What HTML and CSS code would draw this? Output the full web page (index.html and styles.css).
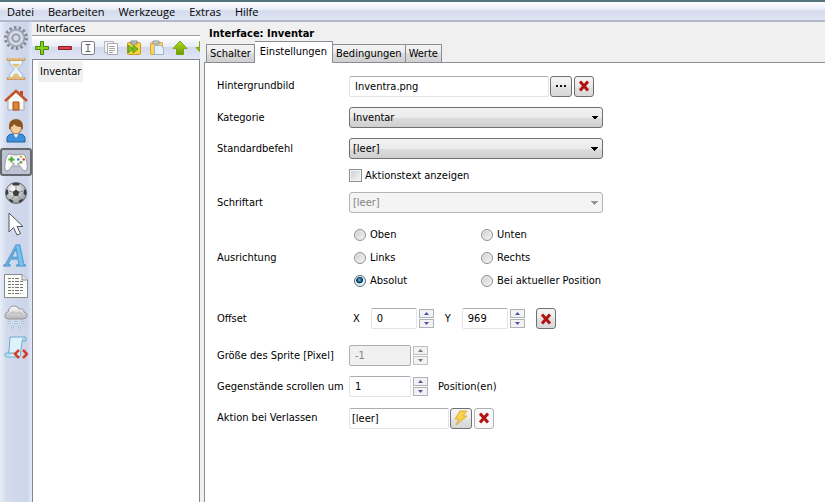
FILE: index.html
```html
<!DOCTYPE html>
<html lang="de">
<head>
    <meta charset="UTF-8">
    <meta name="viewport" content="width=device-width, initial-scale=1.0">
    <title>Interfaces</title>
    <link rel="stylesheet" href="styles.css">
</head>
<body>
    <!-- shared gradients and symbols -->
    <svg class="defs" width="0" height="0" aria-hidden="true">
        <defs>
            <linearGradient id="gBlue" x1="0" y1="0" x2="1" y2="1"><stop offset="0" stop-color="#c5ebfc"/><stop offset="1" stop-color="#3f9bdc"/></linearGradient>
            <linearGradient id="gGrey" x1="0" y1="0" x2="0" y2="1"><stop offset="0" stop-color="#fcfcfc"/><stop offset="1" stop-color="#b5b5b8"/></linearGradient>
            <linearGradient id="gGreen" x1="0" y1="0" x2="0" y2="1"><stop offset="0" stop-color="#b5dc1c"/><stop offset="1" stop-color="#659c06"/></linearGradient>
            <radialGradient id="gBall" cx="40%" cy="30%" r="70%"><stop offset="0" stop-color="#ffffff"/><stop offset="1" stop-color="#95999d"/></radialGradient>
            <symbol id="delete" viewBox="0 0 12 12"><path d="M2 1.500L10 10.500M10 1.500L2 10.500" stroke="#b31212" stroke-width="3" fill="none"/></symbol>
            <symbol id="up" viewBox="0 0 5 3"><path d="M0 3L2.500 0L5 3z" fill="currentColor"/></symbol>
            <symbol id="down" viewBox="0 0 5 3"><path d="M0 0L2.500 3L5 0z" fill="currentColor"/></symbol>
        </defs>
    </svg>

    <nav class="menubar">
        <a href="#">Datei</a>
        <a href="#">Bearbeiten</a>
        <a href="#">Werkzeuge</a>
        <a href="#">Extras</a>
        <a href="#">Hilfe</a>
    </nav>

    <div class="workspace">
        <div class="rail">
            <button type="button" aria-label="Spiel">
                <svg viewBox="0 0 24 24"><circle cx="12" cy="12" r="10.500" fill="none" stroke="#858a98" stroke-width="3" stroke-dasharray="2.500 2.210"/><circle cx="12" cy="12" r="8.500" fill="#bcc0cc" stroke="#8b90a0"/><circle cx="12" cy="12" r="6" fill="none" stroke="#dfe2ea" stroke-width="1.500"/><circle cx="12" cy="12" r="3.500" fill="#d3daeb" stroke="#7d8292"/></svg>
            </button>
            <button type="button" aria-label="Zeit">
                <svg viewBox="0 0 24 24"><path d="M5 3C5 9 10 10 10 12S5 15 5 21H19C19 15 14 14 14 12S19 9 19 3z" fill="#e8f5fc" stroke="#8db5cc"/><path d="M8 7H16Q15 9 12 11Q9 9 8 7zM8 20Q9 17 12 16Q15 17 16 20z" fill="#e6c07c"/><path d="M4 2.500H20M4 21.500H20" stroke="#cf9c5c" stroke-width="3" stroke-linecap="round"/><path d="M4 2H20M4 21H20" stroke="#f4d9ac"/></svg>
            </button>
            <button type="button" aria-label="Räume">
                <svg viewBox="0 0 24 24"><path d="M16 3H19V9H16z" fill="#c84a28"/><path d="M4 11L12 4L20 11V22H4z" fill="#fafafa" stroke="#a5a5a5"/><path d="M1 13L12 3L23 13" fill="none" stroke="#c65526" stroke-width="2.500"/><path d="M9 14H15V22H9z" fill="#df8432" stroke="#a65317"/></svg>
            </button>
            <button type="button" aria-label="Personen">
                <svg viewBox="0 0 24 24"><path d="M3 23Q2 15 8 15H16Q22 15 21 23z" fill="#3f8fd8" stroke="#2165a8"/><path d="M9 14L12 19L15 14z" fill="#ffffff"/><ellipse cx="12" cy="8.500" rx="5.500" ry="6.500" fill="#f5cc9d" stroke="#a46b36"/><path d="M5 11Q4 0 12 0T19 11L17 8Q12 8 10 5Q9 8 7 8z" fill="#8a5420"/></svg>
            </button>
            <button type="button" class="active" aria-label="Interfaces">
                <svg viewBox="0 0 24 24"><path d="M5 4Q12 6 19 4Q22 5 23 13Q24 21 21 21Q19 21 16 16H8Q5 21 3 21Q0 21 1 13Q2 5 5 4z" fill="#fafafa" stroke="#9a9a9c"/><path d="M4.500 9.500H10.500M7.500 6.500V12.500" stroke="#4da83a" stroke-width="2"/><circle cx="17" cy="6.800" r="1.300" fill="#e3ae25"/><circle cx="14.300" cy="9.500" r="1.300" fill="#3a7bd0"/><circle cx="19.700" cy="9.500" r="1.300" fill="#d43b2c"/><circle cx="17" cy="12.200" r="1.300" fill="#46a53b"/><circle cx="9.500" cy="14" r="1.500" fill="#b5b5b8"/><circle cx="14.500" cy="14" r="1.500" fill="#b5b5b8"/></svg>
            </button>
            <button type="button" aria-label="Objekte">
                <svg viewBox="0 0 24 24"><circle cx="12" cy="12" r="10.500" fill="url(#gBall)" stroke="#6a6c6f"/><path d="M12 8.500L15.500 11L14 15H10L8.500 11zM8 2.500Q12 1 16 2.500L15 4.500H9zM2 9L4 8.500L4.500 13L2 14.500Q1.500 11 2 9zM22 9L20 8.500L19.500 13L22 14.500Q22.500 11 22 9zM6 18L9 19.500L9 22Q6 21 4.500 18.500zM18 18L15 19.500L15 22Q18 21 19.500 18.500z" fill="#3d3f42"/><path d="M12 8.500V5M8.500 11L5 10M15.500 11L19 10M10 15L8 18M14 15L16 18" stroke="#8a8a8a"/></svg>
            </button>
            <button type="button" aria-label="Cursor">
                <svg viewBox="0 0 24 24"><path d="M5 1V20L9.500 15.500L13 23L16.500 21.500L13 14.500H19z" fill="#ffffff" stroke="#55575c"/></svg>
            </button>
            <button type="button" aria-label="Schriftarten">
                <span class="font-glyph">A</span>
            </button>
            <button type="button" aria-label="Texte">
                <svg viewBox="0 0 24 24"><path d="M.5.500H18L23.500 6V23.500H.5z" fill="#fbfbf8" stroke="#8a8a8a"/><path d="M18 .5V6H23.500" fill="#e4e4e4" stroke="#8a8a8a"/><path d="M4 4.500H16M4 7.500H20M4 10.500H20M4 13.500H20M4 16.500H20M4 19.500H17" stroke="#777777" stroke-dasharray="3 1 2 1 4 1"/></svg>
            </button>
            <button type="button" aria-label="Partikel">
                <svg viewBox="0 0 24 24"><path d="M4 14Q0 13 1 10Q2 7 4 7Q5 1 10 1Q14 1 15 4Q20 3 20 7Q24 8 23 11Q22 14 19 14z" fill="url(#gGrey)" stroke="#969696"/><path d="M6 9Q9 5 12 9Q16 5 18 10" fill="none" stroke="#b2b2b2"/><g fill="#ffffff" stroke="#9fb7d1"><circle cx="5" cy="17.500" r="1.200"/><circle cx="12" cy="17.500" r="1.200"/><circle cx="19" cy="17.500" r="1.200"/><circle cx="8.500" cy="22" r="1.200"/><circle cx="15.500" cy="22" r="1.200"/></g></svg>
            </button>
            <button type="button" aria-label="Skripte">
                <svg viewBox="0 0 24 24"><path d="M6 1H21Q18 2 18 6L16 21H2Q5 20 5 15z" fill="#def2fb" stroke="#6eaacb"/><path d="M18 5H22Q23 1 20 1M2 21Q-1 17 3 17H12" fill="#b6def1" stroke="#6eaacb"/><path d="M15 14L11 18L15 22M19 14L23 18L19 22" fill="none" stroke="#d43d2b" stroke-width="2.500"/></svg>
            </button>
        </div>

        <section class="sidebar">
            <h2>Interfaces</h2>
            <div class="toolbar">
                <button type="button" aria-label="Hinzufügen"><svg viewBox="0 0 16 16"><path d="M6.500 1.500H9.500V6.500H14.500V9.500H9.500V14.500H6.500V9.500H1.500V6.500H6.500z" fill="#8ed11e" stroke="#41870b"/></svg></button>
                <button type="button" aria-label="Entfernen"><svg viewBox="0 0 16 16"><path d="M1.500 6.500H14.500V9.500H1.500z" fill="#d84444" stroke="#8f1f26"/></svg></button>
                <button type="button" aria-label="Umbenennen"><svg viewBox="0 0 16 16"><rect x="1.500" y="1.500" width="13" height="13" rx="2" fill="#ffffff" stroke="#77797e"/><path d="M5.500 4.500H10.500M8 4.500V11.500M5.500 11.500H10.500" stroke="#606268" fill="none"/></svg></button>
                <button type="button" aria-label="Kopieren"><svg viewBox="0 0 16 16"><path d="M1.500 1.500H10.500V12.500H1.500z" fill="#f5f5f5" stroke="#b7b7bb"/><path d="M4.500 3.500H14.500V14.500H4.500z" fill="#ffffff" stroke="#a8a8ad"/><path d="M6 6.500H12M6 8.500H12M6 10.500H12M6 12.500H10" stroke="#a5a5aa"/></svg></button>
                <button type="button" aria-label="Einfügen und ersetzen"><svg viewBox="0 0 16 16"><rect x="1.500" y="2.500" width="13" height="12" rx="1" fill="#f9d43d" stroke="#c99a20"/><path d="M5 1H11V4H5z" fill="#bfc2c6" stroke="#85888c"/><path d="M2 5L7 9L2 13zM7 5L12 9L7 13z" fill="#82bb20" stroke="#5d9a1b"/></svg></button>
                <button type="button" aria-label="Einfügen"><svg viewBox="0 0 16 16"><rect x="1.500" y="2.500" width="12" height="12" rx="1" fill="#f8d45b" stroke="#d0a544"/><path d="M4 1H10V4H4z" fill="#c9ccd0" stroke="#94979b"/><path d="M5.500 5.500H12L14.500 8V14.500H5.500z" fill="#e4f1fb" stroke="#9bb8cd"/></svg></button>
                <button type="button" aria-label="Nach oben"><svg viewBox="0 0 16 16"><path d="M8 1L15 8.500H11.500V14.500H4.500V8.500H1z" fill="url(#gGreen)" stroke="#7ea60b"/></svg></button>
                <button type="button" aria-label="Nach unten"><svg viewBox="0 0 16 16"><path d="M8 15L1 7.500H4.500V1.500H11.500V7.500H15z" fill="url(#gGreen)" stroke="#7ea60b"/></svg></button>
            </div>
            <ul class="list">
                <li>Inventar</li>
            </ul>
        </section>

        <main class="editor">
            <h1>Interface: Inventar</h1>
            <div class="tabs" role="tablist">
                <button type="button" role="tab">Schalter</button>
                <button type="button" role="tab" class="selected" aria-selected="true">Einstellungen</button>
                <button type="button" role="tab">Bedingungen</button>
                <button type="button" role="tab">Werte</button>
            </div>
            <form class="panel">
                <label for="background">Hintergrundbild</label>
                <div class="field tall">
                    <input type="text" id="background" class="wide" value="Inventra.png">
                    <button type="button" class="icon-btn" aria-label="Durchsuchen"><svg viewBox="0 0 12 12"><path d="M1 5H3V7H1zM5 5H7V7H5zM9 5H11V7H9z" fill="#111111"/></svg></button>
                    <button type="button" class="icon-btn" aria-label="Bild entfernen"><svg><use href="#delete"/></svg></button>
                </div>

                <label for="category">Kategorie</label>
                <select id="category"><option>Inventar</option></select>

                <label for="command">Standardbefehl</label>
                <select id="command"><option>[leer]</option></select>

                <label class="check"><input type="checkbox">Aktionstext anzeigen</label>

                <label for="font">Schriftart</label>
                <select id="font" disabled><option>[leer]</option></select>

                <span id="align-label">Ausrichtung</span>
                <div class="radios" role="radiogroup" aria-labelledby="align-label">
                    <label><input type="radio" name="align">Oben</label>
                    <label><input type="radio" name="align">Unten</label>
                    <label><input type="radio" name="align">Links</label>
                    <label><input type="radio" name="align">Rechts</label>
                    <label><input type="radio" name="align" checked>Absolut</label>
                    <label><input type="radio" name="align">Bei aktueller Position</label>
                </div>

                <span class="spaced">Offset</span>
                <div class="field spaced offset">
                    <label for="offset-x">X</label>
                    <div class="spinner">
                        <input type="number" id="offset-x" value="0">
                        <div class="steps">
                            <button type="button" aria-label="X erhöhen"><svg><use href="#up"/></svg></button>
                            <button type="button" aria-label="X verringern"><svg><use href="#down"/></svg></button>
                        </div>
                    </div>
                    <label for="offset-y">Y</label>
                    <div class="spinner">
                        <input type="number" id="offset-y" value="969">
                        <div class="steps">
                            <button type="button" aria-label="Y erhöhen"><svg><use href="#up"/></svg></button>
                            <button type="button" aria-label="Y verringern"><svg><use href="#down"/></svg></button>
                        </div>
                    </div>
                    <button type="button" class="icon-btn narrow" aria-label="Offset entfernen"><svg><use href="#delete"/></svg></button>
                </div>

                <label class="spaced" for="size">Größe des Sprite [Pixel]</label>
                <div class="spinner large spaced">
                    <input type="number" id="size" value="-1" disabled>
                    <div class="steps">
                        <button type="button" aria-label="Größe erhöhen" disabled><svg><use href="#up"/></svg></button>
                        <button type="button" aria-label="Größe verringern" disabled><svg><use href="#down"/></svg></button>
                    </div>
                </div>

                <label for="scroll">Gegenstände scrollen um</label>
                <div class="field scroll">
                    <div class="spinner large">
                        <input type="number" id="scroll" value="1">
                        <div class="steps">
                            <button type="button" aria-label="Positionen erhöhen"><svg><use href="#up"/></svg></button>
                            <button type="button" aria-label="Positionen verringern"><svg><use href="#down"/></svg></button>
                        </div>
                    </div>
                    <span>Position(en)</span>
                </div>

                <label for="leave">Aktion bei Verlassen</label>
                <div class="field tall">
                    <input type="text" id="leave" class="action" value="[leer]">
                    <button type="button" class="icon-btn" aria-label="Aktion bearbeiten"><svg class="bolt" viewBox="0 0 16 16"><path d="M7 1L14 1L10 6L14 6L3 15L6 9L2 9z" fill="#fbd34b" stroke="#e0ab3a"/></svg></button>
                    <button type="button" class="icon-btn light" aria-label="Aktion entfernen"><svg><use href="#delete"/></svg></button>
                </div>
            </form>
        </main>
    </div>
</body>
</html>
```

FILE: styles.css
```css
* { box-sizing: border-box; }
body {
    margin: 0;
    min-height: 100vh;
    display: flex;
    flex-direction: column;
    background: #f0f0f0;
    color: #000;
    font: 11px/14px Tahoma, "DejaVu Sans Condensed", "Liberation Sans", sans-serif;
}
button, input, select { font: inherit; color: inherit; margin: 0; }
button { padding: 0; }
h1, h2 { margin: 0; font-size: 11px; }
.defs { position: absolute; }

/* Menu */
.menubar {
    display: flex;
    gap: 14px;
    height: 22px;
    padding: 2px 7px 0;
    border-top: 2px solid #55737d;
    border-bottom: 2px solid #b4b7cb;
    background: linear-gradient(#fff, #e9edf8 40%, #d4dbed 50%, #e1e6f5);
    font-family: "Open Sans", sans-serif;
    line-height: 16px;
}
.menubar a { color: #000; text-decoration: none; }

.workspace { flex: 1; display: flex; }

/* Icon rail */
.rail {
    flex: 0 0 32px;
    display: flex;
    flex-direction: column;
    gap: 3px;
    padding-top: 2px;
    background: linear-gradient(90deg, #e8edf8, #d3dbed 20%, #ccd5ea 85%, #e4e9f5);
}
.rail button {
    height: 28px;
    display: flex;
    align-items: center;
    justify-content: center;
    border: 1px solid transparent;
    border-radius: 3px;
    background: none;
}
.rail svg { width: 24px; height: 24px; }
.rail .active {
    border: 2px solid #66686e;
    background: #bcc3d4;
}
.font-glyph {
    color: #7cc2ec;
    font: italic bold 32px/28px "Liberation Serif", serif;
    -webkit-text-stroke: 1px #4a98d0;
}

/* Interface list */
.sidebar {
    flex: 0 0 168px;
    min-width: 0;
    display: flex;
    flex-direction: column;
}
.sidebar h2 {
    height: 14px;
    padding-left: 4px;
    border-bottom: 1px solid #a0a0a0;
    font-weight: normal;
}
.toolbar {
    display: flex;
    gap: 7px;
    height: 23px;
    padding: 4px 0 0 2px;
    overflow: hidden;
    background: linear-gradient(#fff, #e9edf8 45%, #d3daed 50%, #e1e6f6);
}
.toolbar button { flex: 0 0 16px; height: 16px; border: 0; background: none; }
.toolbar svg { display: block; width: 16px; height: 16px; }
.list {
    flex: 1;
    margin: 0;
    padding: 1px 5px;
    border: 1px solid #828790;
    border-bottom: 0;
    background: #fff;
    list-style: none;
}
.list li {
    width: max-content;
    padding: 4px 2px 3px;
    background: #f0f0f0;
}

/* Editor */
.editor {
    flex: 1;
    min-width: 0;
    display: flex;
    flex-direction: column;
    padding: 5px 0 0 4px;
}
.editor h1 { padding-left: 5px; }
.tabs {
    display: flex;
    align-items: flex-end;
    height: 21px;
    padding-left: 2px;
}
.tabs button {
    height: 18px;
    padding: 0 3px;
    border: 1px solid #898c95;
    border-bottom: 0;
    background: linear-gradient(#f3f3f3, #ebebeb 50%, #dcdcdc 50%, #cfcfcf);
}
.tabs button + button { border-left: 0; }
.tabs .selected {
    height: 22px;
    margin-bottom: -1px;
    padding: 0 5px 2px;
    background: #fff;
    z-index: 1;
}
.panel {
    flex: 1;
    display: grid;
    grid-template-columns: 132px minmax(0, 1fr);
    align-content: start;
    align-items: center;
    gap: 10px 0;
    padding: 12px;
    border: 1px solid #898c95;
    border-width: 1px 0 0 1px;
    background: #fff;
}
.spaced { margin-top: 6px; }
.field { display: flex; align-items: center; gap: 1px; }
.tall { height: 22px; }
.panel input[type="text"], .panel input[type="number"] {
    height: 21px;
    padding: 0 5px;
    border: 1px solid #e2e3ea;
    border-top-color: #abadb3;
    border-radius: 2px;
    background: #fff;
    appearance: textfield;
}
.panel input::-webkit-inner-spin-button { appearance: none; }
.panel .wide { width: 200px; }
.panel .action[type="text"] { width: 100px; padding: 0 2px; }
.panel input:disabled {
    border-color: #afafaf;
    background: #f0f0f0;
    color: #838383;
}
.icon-btn {
    display: flex;
    align-items: center;
    justify-content: center;
    width: 22px;
    height: 21px;
    border: 1px solid #707070;
    border-radius: 3px;
    background: linear-gradient(#f4f4f4, #ebebeb 50%, #e2e2e2 50%, #d8d8d8);
}
.icon-btn + .icon-btn { margin-left: 1px; width: 20px; }
.icon-btn.narrow { width: 20px; }
.icon-btn svg { width: 12px; height: 12px; }
.icon-btn .bolt { width: 16px; height: 16px; }
.icon-btn.light { border-color: #adb2b5; background: #f8f8f8; }

select {
    width: 254px;
    height: 21px;
    padding: 0 3px;
    border: 1px solid #707070;
    border-radius: 3px;
    background:
        linear-gradient(to bottom right, #000 50%, transparent 50%) right 3px center / 4px 4px no-repeat,
        linear-gradient(to bottom left, #000 50%, transparent 50%) right 7px center / 4px 4px no-repeat,
        linear-gradient(#f2f2f2, #ebebeb 50%, #ddd 50%, #cfcfcf);
    appearance: none;
}
select:disabled {
    border-color: #b5b5b5;
    background:
        linear-gradient(to bottom right, #999 50%, transparent 50%) right 3px center / 4px 4px no-repeat,
        linear-gradient(to bottom left, #999 50%, transparent 50%) right 7px center / 4px 4px no-repeat,
        #f4f4f4;
    color: #838383;
    opacity: 1;
}

.check {
    grid-column: 2;
    display: flex;
    align-items: center;
    gap: 3px;
    height: 13px;
}
.check input {
    width: 13px;
    height: 13px;
    border: 1px solid #8e8f8f;
    background: linear-gradient(135deg, #cbcfd5, #f6f6f6);
    box-shadow: inset 0 0 0 1px #f4f4f4;
    appearance: none;
}
.radios {
    display: grid;
    grid-template-columns: 127px max-content;
    grid-auto-rows: 23px;
    padding-left: 5px;
}
.radios label { display: flex; align-items: center; gap: 4px; }
.radios input {
    width: 12px;
    height: 12px;
    border: 1px solid #8e8f8f;
    border-radius: 50%;
    background: linear-gradient(135deg, #cdcdcd, #f6f6f6);
    box-shadow: inset 0 0 0 1px #eee;
    appearance: none;
}
.radios input:checked {
    border-color: #4e7088;
    background: radial-gradient(circle at 45% 40%, #6fd0f3, #12577f 25%, #0b2b43 38%, #e4edf2 46%);
}

.spinner { display: flex; gap: 2px; }
.spinner input { width: 46px; }
.spinner.large input { width: 62px; }
.steps { display: flex; flex-direction: column; gap: 1px; padding-top: 1px; }
.steps button {
    display: flex;
    align-items: center;
    justify-content: center;
    width: 15px;
    height: 9px;
    border: 1px solid #b0b0b8;
    background: #f2f2f5;
    color: #4e53a6;
}
.steps button:disabled { border-color: #c0c0c0; color: #777; }
.steps svg { width: 5px; height: 3px; }
.offset { gap: 11px; padding-left: 4px; }
.scroll { gap: 10px; }
```
